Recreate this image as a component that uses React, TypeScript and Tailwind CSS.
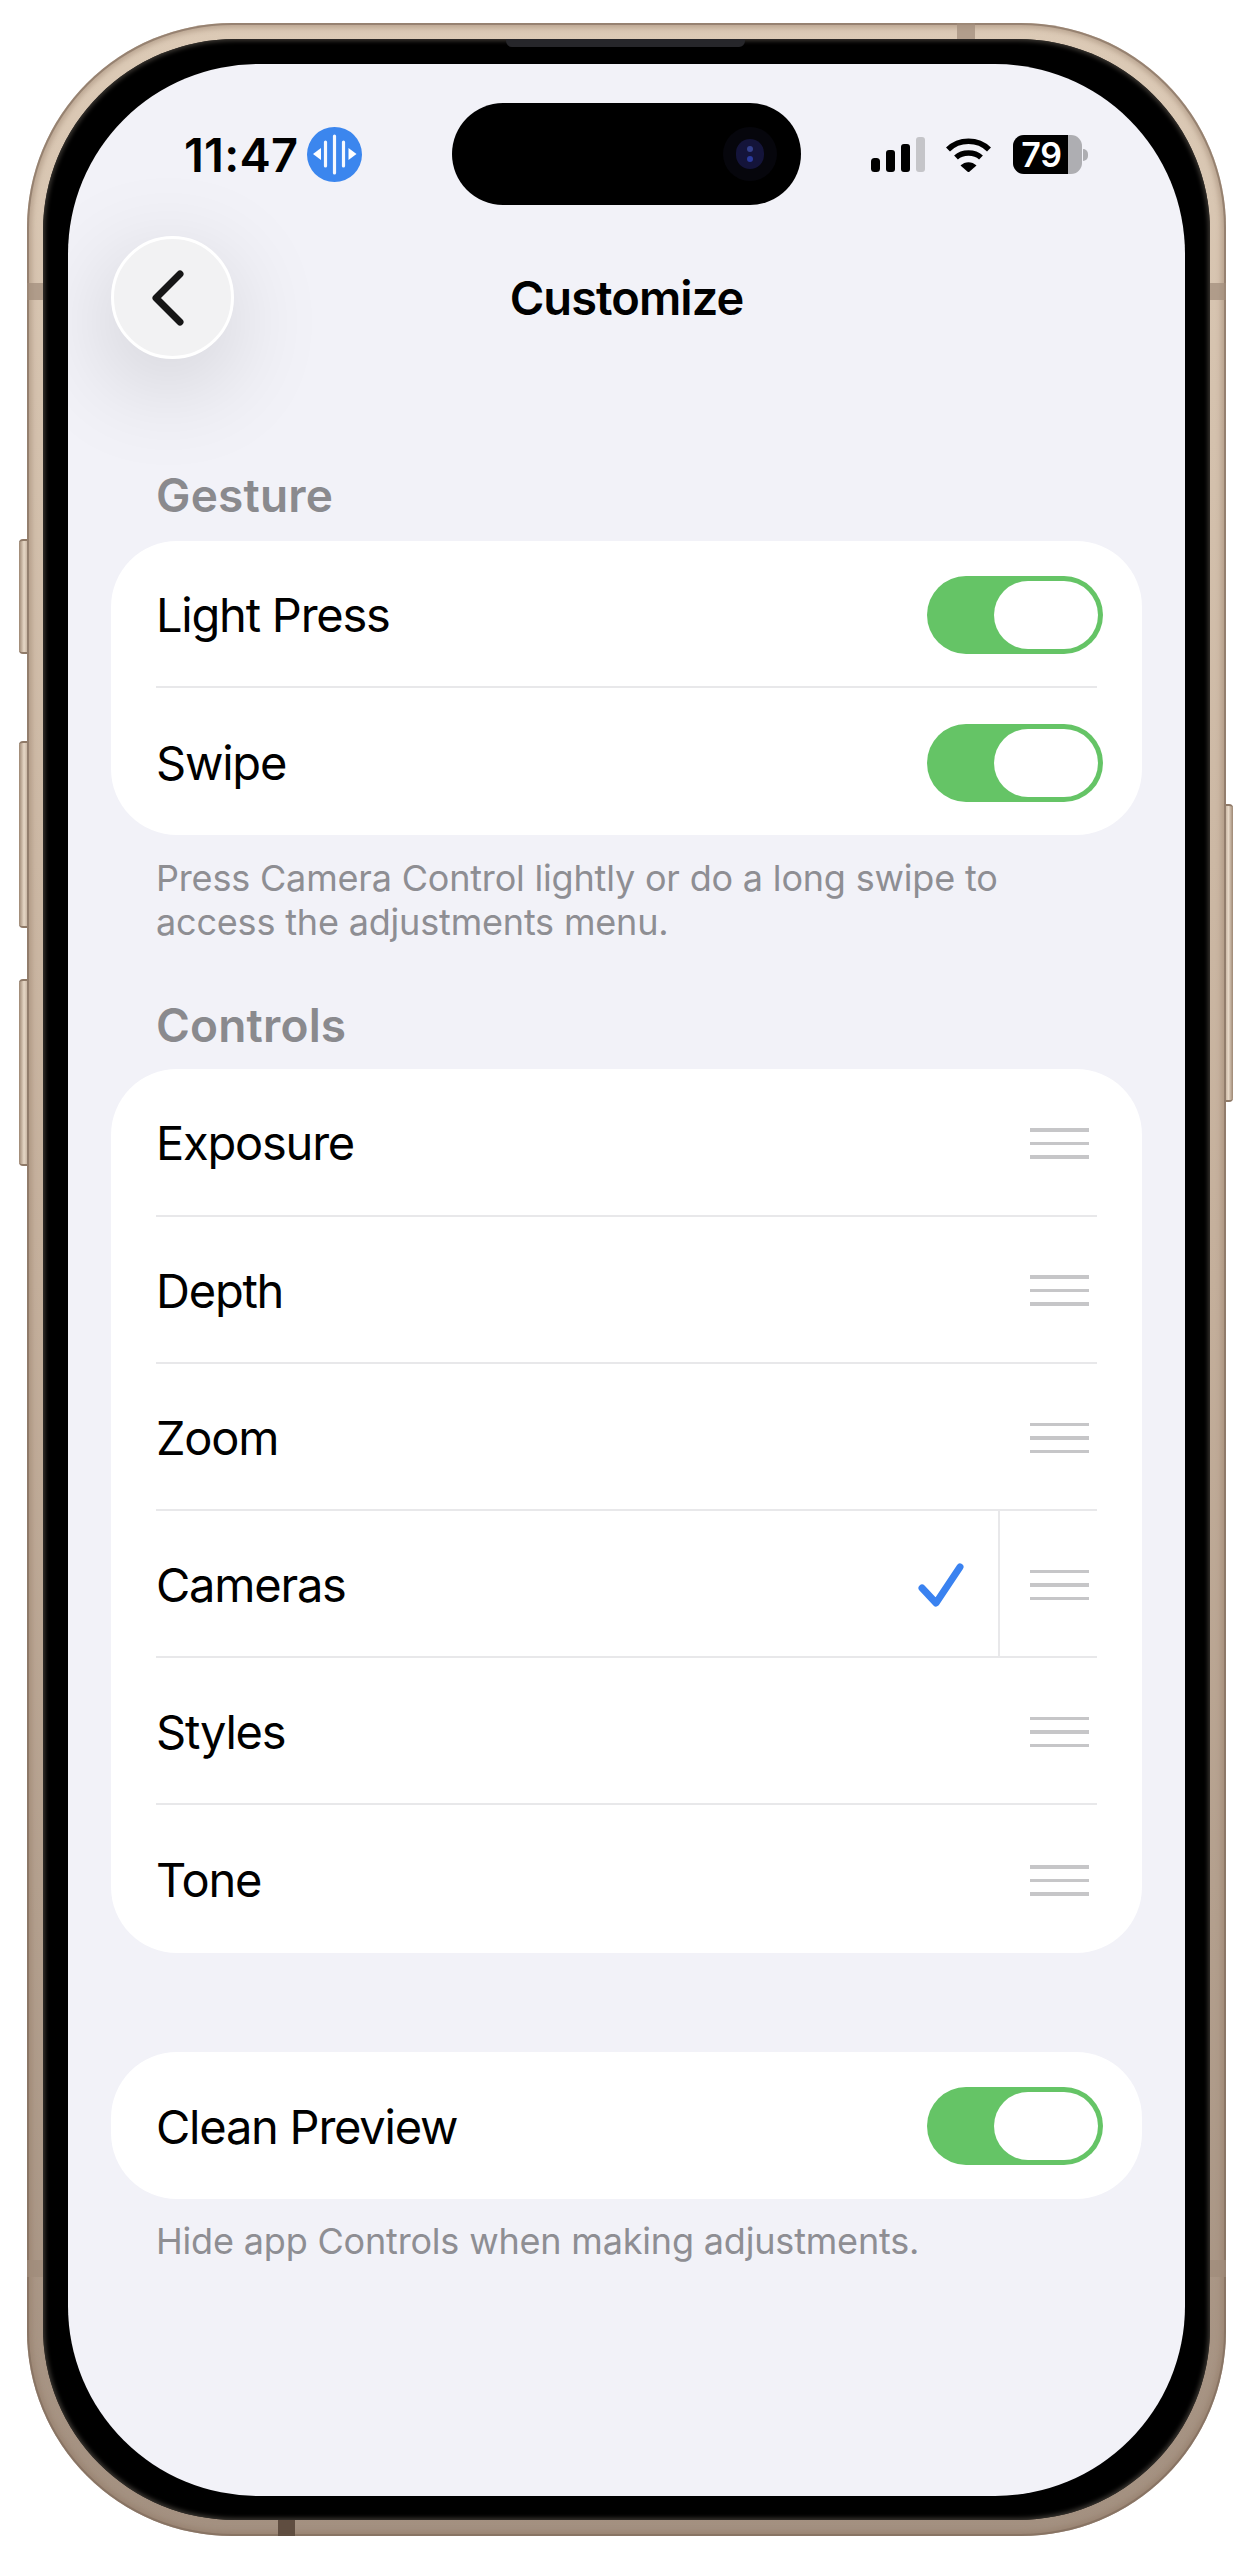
import React from "react";

const Toggle = () => (
  <div className="mt-[2px] flex h-[78px] w-[176px] shrink-0 items-center justify-end rounded-full bg-[#65c466] pr-[5px]">
    <div className="h-[68px] w-[104px] rounded-full bg-white" />
  </div>
);

const Handle = () => (
  <div className="mt-[3px] flex w-[59px] shrink-0 flex-col gap-[10px]">
    <div className="h-[3.5px] bg-[#c6c6c8]" />
    <div className="h-[3.5px] bg-[#c6c6c8]" />
    <div className="h-[3.5px] bg-[#c6c6c8]" />
  </div>
);

const Row = ({ label, last, children }: { label: string; last?: boolean; children?: React.ReactNode }) => (
  <div className={`mx-[45px] flex h-[147.2px] items-center ${last ? "" : "border-b-[2px] border-[#e8e8ea]"}`}>
    <span className="flex-1 pt-[2px] text-[47px] leading-none tracking-[-0.026em] text-black">{label}</span>
    {children}
  </div>
);

const Header = ({ children, className }: { children: string; className: string }) => (
  <div className={`ml-[88px] text-[46px] font-semibold leading-[56px] tracking-[0.004em] text-[#8a8a8e] ${className}`}>{children}</div>
);

const Foot = ({ children, className }: { children: React.ReactNode; className: string }) => (
  <div className={`ml-[88px] text-[36px] leading-[44px] tracking-[-0.005em] text-[#8e8e93] ${className}`}>{children}</div>
);

const ToggleRow = ({ label, last }: { label: string; last?: boolean }) => (
  <Row label={label} last={last}>
    <div className="-mr-[6px]">
      <Toggle />
    </div>
  </Row>
);

const HandleRow = ({ label, last }: { label: string; last?: boolean }) => (
  <Row label={label} last={last}>
    <div className="mr-[8px]">
      <Handle />
    </div>
  </Row>
);

const Band = ({ className }: { className: string }) => <div className={`absolute bg-[#a08c7b] ${className}`} />;

export default function App() {
  return (
    <div className="relative h-[2560px] w-[1252px] overflow-hidden bg-white pl-[27px] pt-[23px] [font-family:Inter,'Liberation_Sans',sans-serif]">
      {/* side buttons */}
      <div className="absolute left-[19px] top-[539px] h-[115px] w-[10px] rounded-l-[4px] border-y-[2px] border-[#8f7a68] bg-gradient-to-r from-[#9d8773] via-[#e6d7c6] to-[#b9a592]" />
      <div className="absolute left-[19px] top-[741px] h-[187px] w-[10px] rounded-l-[4px] border-y-[2px] border-[#8f7a68] bg-gradient-to-r from-[#9d8773] via-[#e6d7c6] to-[#b9a592]" />
      <div className="absolute left-[19px] top-[979px] h-[187px] w-[10px] rounded-l-[4px] border-y-[2px] border-[#8f7a68] bg-gradient-to-r from-[#9d8773] via-[#e6d7c6] to-[#b9a592]" />
      <div className="absolute left-[1224px] top-[804px] h-[298px] w-[9px] rounded-r-[4px] border-y-[2px] border-[#8f7a68] bg-gradient-to-r from-[#b9a592] via-[#e6d7c6] to-[#9d8773]" />

      {/* device */}
      <div className="relative h-[2513px] w-[1199px] rounded-[205px] bg-gradient-to-b from-[#dccab6] via-[#c4af9b] to-[#a39080] p-[16px] shadow-[inset_0_0_0_2px_rgba(125,105,90,0.6),inset_0_0_5px_5px_rgba(140,115,95,0.4)]">
        <Band className="left-[930px] top-0 h-[16px] w-[18px] opacity-70" />
        <Band className="left-0 top-[260px] h-[17px] w-[16px] opacity-70" />
        <Band className="right-0 top-[260px] h-[17px] w-[16px] opacity-70" />
        <Band className="left-0 top-[2237px] h-[17px] w-[16px] opacity-70" />
        <Band className="right-0 top-[2237px] h-[17px] w-[16px] opacity-70" />
        <div className="absolute bottom-0 left-[251px] h-[16px] w-[17px] bg-[#5f4d40]" />

        <div className="relative h-[2481px] w-[1167px] rounded-[192px] bg-black pb-[24px] pl-[25px] pt-[25px] shadow-[inset_0_0_4px_2px_#3a3631]">
          {/* earpiece */}
          <div className="absolute left-[463px] top-0 h-[8px] w-[239px] rounded-b-[6px] bg-[#26262a]" />

          {/* screen */}
          <div className="relative h-[2432px] w-[1117px] overflow-hidden rounded-[190px] bg-[#f2f2f8]">
            {/* dynamic island */}
            <div className="absolute left-[384px] top-[39px] flex h-[102px] w-[349px] items-center justify-end rounded-full bg-black pr-[24px]">
              <div className="flex h-[54px] w-[54px] items-center justify-center rounded-full bg-[#06060c]">
                <div className="flex h-[30px] w-[28px] flex-col items-center justify-center gap-[4px] rounded-full bg-[#14143a]">
                  <div className="h-[6px] w-[6px] rounded-full bg-[#34408c]" />
                  <div className="h-[6px] w-[6px] rounded-full bg-[#2a3a9c]" />
                </div>
              </div>
            </div>

            {/* status bar */}
            <div className="mt-[63px] flex h-[55px] items-center pl-[116px]">
              <span className="w-[123px] text-[47px] font-semibold leading-none tracking-[0.005em] text-black">11:47</span>
              <svg width="55" height="55" viewBox="0 0 55 55" className="shrink-0">
                <circle cx="27.5" cy="27.5" r="27.5" fill="#3b86ee" />
                <g stroke="#fff" strokeWidth="3.2" strokeLinecap="round" opacity="0.95">
                  <path d="M27.5 9V46" />
                  <path d="M18.5 15V39" />
                  <path d="M36.5 15V39" />
                </g>
                <path d="M14 21V33L6 27Z" fill="#fff" />
                <path d="M41.5 21V33L49.5 27Z" fill="#fff" />
              </svg>
              <div className="ml-[509px] flex items-center">
                <svg width="54" height="35" viewBox="0 0 54 35" className="shrink-0">
                  <rect x="0" y="21" width="9" height="14" rx="3.5" fill="#000" />
                  <rect x="15" y="13" width="9" height="22" rx="3" fill="#000" />
                  <rect x="30" y="7" width="9" height="28" rx="3" fill="#000" />
                  <rect x="45" y="0" width="9" height="35" rx="3" fill="#c5c5c9" />
                </svg>
                <svg width="47" height="35" viewBox="0 0 47 35" className="ml-[20px] shrink-0">
                  <path d="M3 12.5C14 1.5 33 1.5 44 12.5" fill="none" stroke="#000" strokeWidth="5.6" strokeLinecap="butt" />
                  <path d="M11 20.5C17.5 14.5 29.5 14.5 36 20.5" fill="none" stroke="#000" strokeWidth="5.6" strokeLinecap="butt" />
                  <path d="M15.5 28.5C20 24 27 24 31.5 28.5L23.5 35.5Z" fill="#000" />
                </svg>
                <div className="ml-[21px] flex items-center">
                  <div className="flex h-[39px] w-[69px] overflow-hidden rounded-[11px] bg-[#aeaeb2]">
                    <div className="flex h-full w-[55px] items-center justify-center bg-black pl-[2px] text-[34px] font-semibold leading-none tracking-[-0.01em] text-white">79</div>
                  </div>
                  <div className="ml-[1px] h-[12px] w-[5px] rounded-r-full bg-[#aeaeb2]" />
                </div>
              </div>
            </div>

            {/* nav */}
            <div className="mt-[54px] grid grid-cols-[1fr_auto_1fr] items-center">
              <div className="ml-[43px] flex h-[123px] w-[123px] items-center justify-center rounded-full border-[3px] border-white bg-[#f2f2f3] shadow-[-4px_24px_100px_rgba(0,0,0,0.16)]">
                <svg width="36" height="58" viewBox="0 0 36 58" className="-ml-[10px]">
                  <path d="M30 5L6 29L30 53" fill="none" stroke="#161616" strokeWidth="7" strokeLinecap="round" strokeLinejoin="round" />
                </svg>
              </div>
              <div className="text-[47px] font-semibold leading-none tracking-[-0.02em] text-black">Customize</div>
              <div />
            </div>

            <Header className="mt-[108px]">Gesture</Header>
            <div className="mx-[43px] mt-[18px] rounded-[66px] bg-white">
              <ToggleRow label="Light Press" />
              <ToggleRow label="Swipe" last />
            </div>
            <Foot className="mt-[21px]">
              Press Camera Control lightly or do a long swipe to
              <br />
              access the adjustments menu.
            </Foot>

            <Header className="mt-[53px]">Controls</Header>
            <div className="mx-[43px] mt-[16px] rounded-[66px] bg-white">
              <HandleRow label="Exposure" />
              <HandleRow label="Depth" />
              <HandleRow label="Zoom" />
              <Row label="Cameras">
                <svg width="46" height="46" viewBox="0 0 46 46" className="mr-[34px] mt-[4px] shrink-0">
                  <path d="M4 25L18 40L42 4" fill="none" stroke="#3a82f0" strokeWidth="7" strokeLinecap="round" strokeLinejoin="round" />
                </svg>
                <div className="flex h-full w-[99px] shrink-0 items-center justify-end border-l-[2px] border-[#e8e8ea] pr-[8px]">
                  <Handle />
                </div>
              </Row>
              <HandleRow label="Styles" />
              <HandleRow label="Tone" last />
            </div>

            <div className="mx-[43px] mt-[99px] rounded-[66px] bg-white">
              <ToggleRow label="Clean Preview" last />
            </div>
            <Foot className="mt-[20px]">Hide app Controls when making adjustments.</Foot>
          </div>
        </div>
      </div>
    </div>
  );
}
